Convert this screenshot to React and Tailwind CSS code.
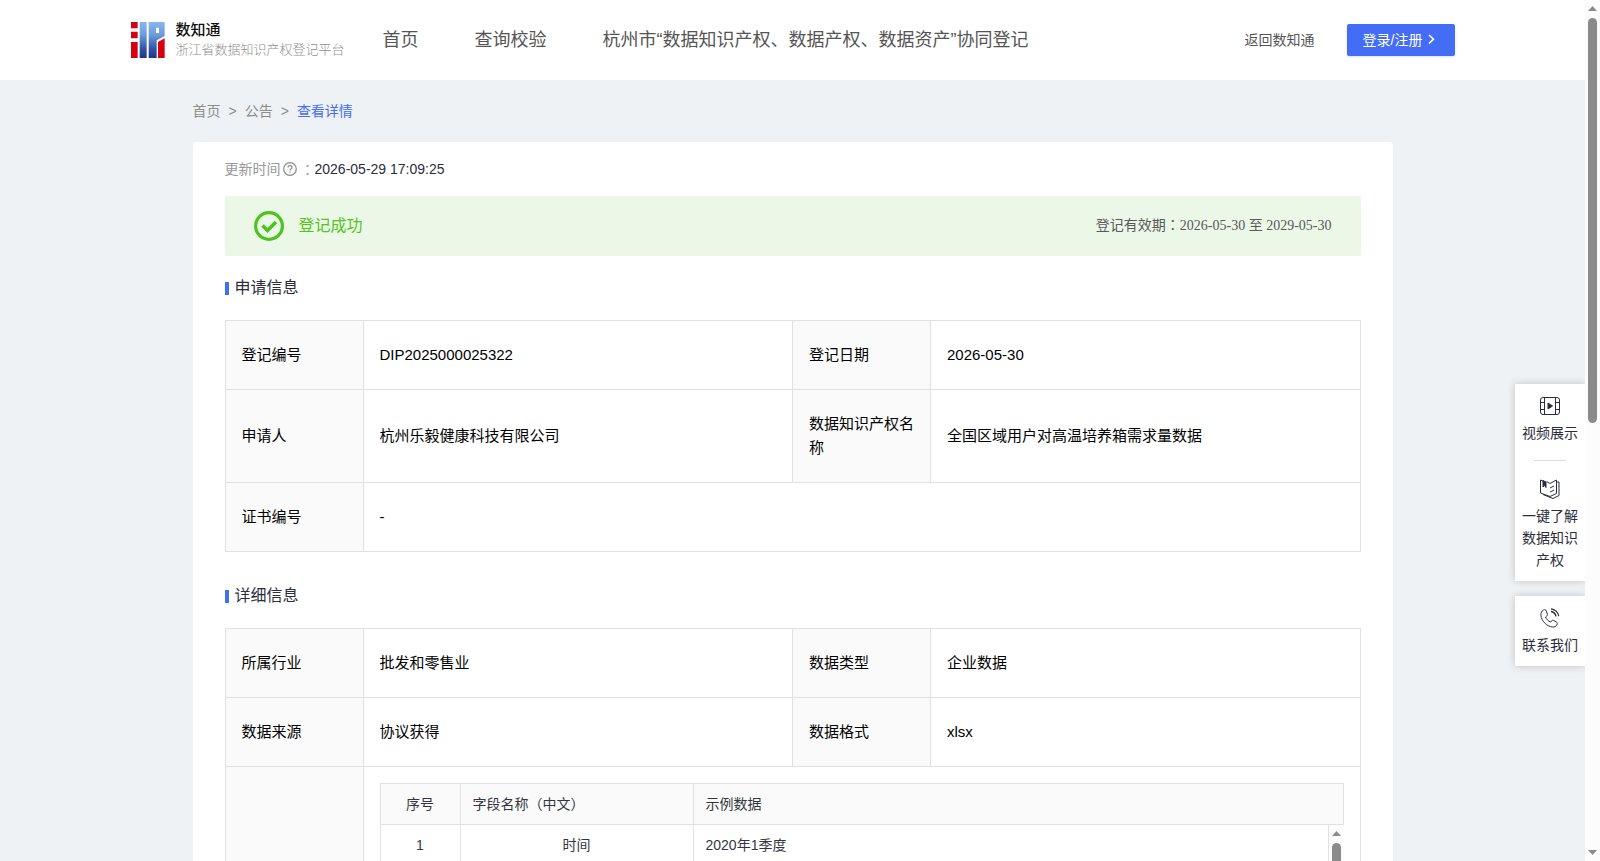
import React from "react";

const NAV = ["首页", "查询校验", "杭州市“数据知识产权、数据产权、数据资产”协同登记"];

const APPLY_ROWS = [
  ["登记编号", "DIP2025000025322", "登记日期", "2026-05-30"],
  ["申请人", "杭州乐毅健康科技有限公司", "数据知识产权名称", "全国区域用户对高温培养箱需求量数据"],
  ["证书编号", "-"],
];

const DETAIL_ROWS = [
  ["所属行业", "批发和零售业", "数据类型", "企业数据"],
  ["数据来源", "协议获得", "数据格式", "xlsx"],
];

function Logo() {
  return (
    <svg className="h-9 w-[34px]" viewBox="0 0 102 108" aria-hidden="true">
      <defs>
        <linearGradient id="logoBlue" x1="0" y1="0" x2="0" y2="108" gradientUnits="userSpaceOnUse">
          <stop offset="0" stopColor="#86b8ec" />
          <stop offset="0.35" stopColor="#6c9ddb" />
          <stop offset="0.75" stopColor="#3153a2" />
          <stop offset="1" stopColor="#1f3584" />
        </linearGradient>
      </defs>
      <g fill="#d7000f">
        <path d="M0 0h20v19H0zM0 29h20v20H0zM0 60h20v48H0z" />
        <path d="M81 60l20-11v59H81z" />
      </g>
      <g fill="url(#logoBlue)">
        <path d="M26 0h21v108H26z" />
        <path fillRule="evenodd" d="M53 0h48v42L77 55v53H53zM75 17v16h9V17z" />
      </g>
    </svg>
  );
}

function VideoIcon() {
  return (
    <svg className="h-5 w-5" viewBox="0 0 20 20" fill="none" stroke="#2b2d3b" aria-hidden="true">
      <rect x="0.5" y="1.5" width="19" height="17" rx="2.5" />
      <path d="M4.500 1.500v17M15.500 1.500v17M0.500 6.500h4M0.500 13.500h4M15.500 6.500h4M15.500 13.500h4" />
      <path d="M8 7v6l4.500-3z" fill="#2b2d3b" />
    </svg>
  );
}

function BookIcon() {
  return (
    <svg className="h-5 w-5" viewBox="0 0 20 20" fill="none" stroke="#2b2d3b" aria-hidden="true">
      <path d="M6.500 2.500L10 4.500l6.500-3.500v13.500L10 17.500l-9.500-3.500V1l2.500 1" />
      <path d="M3 1.500v6.500l1.500-1.500L6 8.500V3z" fill="#2b2d3b" />
      <path d="M16.500 3h2.500v13.500L13 19.500l-10-4" />
      <path d="M10 9l4-2M10 13l4-2" />
    </svg>
  );
}

function PhoneIcon() {
  return (
    <svg className="h-5 w-5" viewBox="0 0 20 20" fill="none" stroke="#2b2d3b" aria-hidden="true">
      <path d="M3.500 2C1.500 3.200.7 5 .9 7.200c.5 5.800 5.900 11.300 11.600 11.800 2.200.2 4-.9 4.700-2.900.3-1-.1-1.600-.9-2.100l-2.600-1.500c-.9-.5-1.600-.3-2.200.4l-.9 1.100c-2.200-.7-4.300-2.800-5-5l1.200-1c.7-.6.9-1.200.5-2L6.200 2.800C5.700 1.600 4.600 1.300 3.500 2z" />
      <path d="M11 .8c4 .3 7.200 3.400 7.700 7.400M11 3.500c2.600.4 4.500 2.300 5 4.900" strokeWidth="1.300" />
    </svg>
  );
}

function Arrow({ down }) {
  return (
    <svg className="h-[5px] w-[9px] shrink-0" viewBox="0 0 9 5" fill="#8b8b8b" aria-hidden="true">
      <path d={down ? "M0 0h9L4.500 5z" : "M0 5h9L4.500 0z"} />
    </svg>
  );
}

// full-width colon that sits in the middle of its box
function Colon() {
  return <span className="font-['Noto_Sans_CJK_TC',sans-serif] leading-none">：</span>;
}

function SectionTitle({ children }) {
  return (
    <h2 className="flex h-6 items-center gap-[6px] text-base text-[#2b2d3b]">
      <span className="h-[13px] w-1 bg-[#426df5]" />
      {children}
    </h2>
  );
}

function InfoTable({ rows, children }) {
  return (
    <table className="mt-5 w-full table-fixed border-collapse text-[15px] leading-6 text-black">
      <colgroup>
        <col className="w-[138px]" />
        <col />
        <col className="w-[138px]" />
        <col />
      </colgroup>
      <tbody>
        {rows.map((row) => (
          <tr key={row[0]}>
            {row.map((cell, i) =>
              i % 2 === 0 ? (
                <th key={i} scope="row" className="border border-[#e1e1e1] bg-[#fafafa] px-4 py-[22px] text-left font-normal">
                  {cell}
                </th>
              ) : (
                <td key={i} colSpan={row.length === 2 ? 3 : 1} className="border border-[#e1e1e1] px-4 py-[22px]">
                  {cell}
                </td>
              )
            )}
          </tr>
        ))}
        {children}
      </tbody>
    </table>
  );
}

function FieldCols() {
  return (
    <colgroup>
      <col className="w-20" />
      <col className="w-[233px]" />
      <col />
    </colgroup>
  );
}

function FieldTable() {
  return (
    <div className="text-sm text-[#34363f]">
      <table className="w-full table-fixed border-collapse">
        <FieldCols />
        <thead>
          <tr className="h-[41px] bg-[#fafafa]">
            <th className="border border-[#e1e1e1] font-normal">序号</th>
            <th className="border border-[#e1e1e1] px-3 text-left font-normal">字段名称（中文）</th>
            <th className="border border-[#e1e1e1] px-3 text-left font-normal">示例数据</th>
          </tr>
        </thead>
      </table>
      <div className="flex items-start">
        <table className="min-w-0 flex-1 table-fixed border-collapse">
          <FieldCols />
          <tbody>
            <tr className="h-[41px]">
              <td className="border border-t-0 border-[#e1e1e1] text-center">1</td>
              <td className="border border-t-0 border-[#e1e1e1] text-center">时间</td>
              <td className="border border-t-0 border-[#e1e1e1] px-3">2020年1季度</td>
            </tr>
          </tbody>
        </table>
        <div className="flex w-[15px] flex-col items-center gap-[7px] bg-[#fcfcfc] pt-[6px]">
          <Arrow />
          <span className="h-20 w-[9px] rounded-full bg-[#8b8b8b]" />
        </div>
      </div>
    </div>
  );
}

function SideButton({ icon, children }) {
  return (
    <button className="flex w-full flex-col items-center gap-[6px] px-[7px] text-sm leading-[22px] text-[#2b2d3b]">
      {icon}
      <span>{children}</span>
    </button>
  );
}

export default function App() {
  return (
    <div className="flex h-screen overflow-hidden bg-[#eef2f5] font-['Liberation_Sans','Noto_Sans_CJK_SC',sans-serif]">
      <div className="relative min-w-0 flex-1 overflow-hidden">
        <header className="h-20 bg-white">
          <div className="mx-auto flex h-full max-w-[1324px] items-center">
            <a href="#" className="flex w-[252px] shrink-0 items-center gap-[11px]">
              <Logo />
              <span className="flex flex-col whitespace-nowrap">
                <span className="text-[15px] leading-5 font-medium text-[#111]">数知通</span>
                <span className="text-[13px] leading-5 font-light text-[#909090]">浙江省数据知识产权登记平台</span>
              </span>
            </a>
            <nav className="flex gap-14 text-lg whitespace-nowrap text-[#555]">
              {NAV.map((item) => (
                <a key={item} href="#">{item}</a>
              ))}
            </nav>
            <a href="#" className="ml-auto text-sm text-[#555]">返回数知通</a>
            <button className="ml-8 flex h-8 w-[108px] items-center gap-[3px] rounded-xs bg-[#446df6] pl-4 text-sm text-white shadow-sm">
              登录/注册
              <svg className="h-3 w-3" viewBox="0 0 12 12" fill="none" stroke="currentColor" strokeWidth="1.6" aria-hidden="true">
                <path d="M4 1l4.500 4.200L4 9.500" />
              </svg>
            </button>
          </div>
        </header>

        <main className="mx-auto max-w-[1200px]">
          <nav className="flex h-[62px] items-center gap-2 text-sm text-[#8c8c8c]">
            <a href="#">首页</a>
            <span>&gt;</span>
            <a href="#">公告</a>
            <span>&gt;</span>
            <a href="#" className="text-[#426df5]">查看详情</a>
          </nav>

          <div className="rounded-t bg-white px-8 pt-4">
            <div className="flex h-[22px] items-center text-sm text-[#999]">
              更新时间
              <svg className="mr-1 ml-[2px] h-[14px] w-[14px]" viewBox="0 0 14 14" fill="none" stroke="#8c8c8c" strokeWidth="1.2" aria-hidden="true">
                <circle cx="7" cy="7" r="6.300" />
                <path d="M5 5.600C5 4.300 5.800 3.700 7 3.700s2 .7 2 1.700c0 1.400-2 1.400-2 3M7 9.500v1.200" />
              </svg>
              <Colon />
              <span className="text-[#2b2d3b]">2026-05-29 17:09:25</span>
            </div>

            {/* Status banner */}
            <div className="mt-4 flex h-[60px] items-center bg-[#ebf7e7] px-[29px]">
              <svg className="h-[30px] w-[30px]" viewBox="0 0 30 30" fill="none" stroke="#4dc41e" aria-hidden="true">
                <circle cx="15" cy="15" r="13.400" strokeWidth="3.200" />
                <path d="M8.500 14.500l5 5 8.500-8.500" strokeWidth="3.600" />
              </svg>
              <span className="ml-[15px] text-base text-[#52c41a]">登记成功</span>
              <span className="ml-auto font-['Liberation_Serif','Noto_Sans_CJK_SC',serif] text-sm text-[#595959]">
                登记有效期<Colon />2026-05-30 至 2029-05-30
              </span>
            </div>

            <section className="mt-5">
              <SectionTitle>申请信息</SectionTitle>
              <InfoTable rows={APPLY_ROWS} />
            </section>

            <section className="mt-8">
              <SectionTitle>详细信息</SectionTitle>
              <InfoTable rows={DETAIL_ROWS}>
                <tr>
                  <th className="border border-[#e1e1e1] bg-[#fafafa]" />
                  <td colSpan={3} className="border border-[#e1e1e1] p-4">
                    <FieldTable />
                  </td>
                </tr>
              </InfoTable>
            </section>
          </div>
        </main>

        {/* Floating shortcuts */}
        <aside className="absolute top-96 right-0 flex w-[70px] flex-col gap-[15px]">
          <div className="flex flex-col items-center bg-white pt-3 pb-[10px] shadow-[0_0_8px_rgba(0,0,0,0.2)]">
            <SideButton icon={<VideoIcon />}>视频展示</SideButton>
            <hr className="mt-4 mb-[18px] w-8 border-[#dcdcdc]" />
            <SideButton icon={<BookIcon />}>一键了解数据知识产权</SideButton>
          </div>
          <div className="bg-white pt-3 pb-[10px] shadow-[0_0_8px_rgba(0,0,0,0.2)]">
            <SideButton icon={<PhoneIcon />}>联系我们</SideButton>
          </div>
        </aside>
      </div>

      <div className="flex w-[15px] shrink-0 flex-col items-center bg-[#fcfcfc] py-[6px]">
        <Arrow />
        <span className="mt-[7px] h-[405px] w-[9px] rounded-full bg-[#8b8b8b]" />
        <span className="mt-auto flex">
          <Arrow down />
        </span>
      </div>
    </div>
  );
}
